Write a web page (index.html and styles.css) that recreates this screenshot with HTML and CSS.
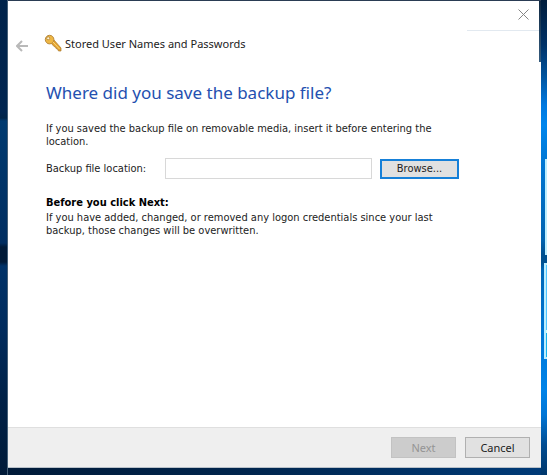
FILE: index.html
```
<!DOCTYPE html>
<html lang="en">
<head>
<meta charset="utf-8">
<title>Stored User Names and Passwords</title>
<link rel="stylesheet" href="styles.css">
</head>
<body>
<div class="desktop">
  <div class="side-left"></div>
  <main class="dialog">
    <div class="titlebar">
      <svg class="close" width="11" height="11" viewBox="0 0 11 11"><path d="M.5.5l10 10M10.5.5l-10 10"/></svg>
    </div>
    <header class="header">
      <svg class="back" width="12" height="12" viewBox="0 0 12 12"><path d="M12 6H1.5M6 1L1 6l5 5"/></svg>
      <svg class="key" width="18" height="18" viewBox="0 0 18 18">
        <path class="key-shaft" d="M8 7l2-1 7 8v3h-2.500l-1-2-1.500-.5-.5-1.500-1.500-.5L7 9z"/>
        <circle class="key-bow" cx="5.600" cy="5.600" r="4.300"/>
        <circle class="key-hole" cx="4.200" cy="4.300" r="1.500"/>
        <path class="key-shine" d="M9 8l6.500 7"/>
      </svg>
      <span class="name">Stored User Names and Passwords</span>
    </header>
    <section class="content">
      <h1>Where did you save the backup file?</h1>
      <p class="intro"><span class="l1">If you saved the backup file on removable media, insert it before entering the</span><br><span>location.</span></p>
      <div class="field">
        <label for="path">Backup file location:</label>
        <input id="path" type="text">
        <button class="browse">Browse...</button>
      </div>
      <h2>Before you click Next:</h2>
      <p class="note"><span class="l2">If you have added, changed, or removed any logon credentials since your last</span><br><span class="l3">backup, those changes will be overwritten.</span></p>
    </section>
    <footer class="footer">
      <button class="next" disabled>Next</button>
      <button class="cancel">Cancel</button>
    </footer>
  </main>
  <div class="side-right">
    <div class="pane pane-top"></div>
    <div class="pane pane-bottom"></div>
  </div>
</div>
</body>
</html>
```
FILE: styles.css
```
* { box-sizing: border-box; }
body { margin: 0; overflow: hidden; }
.desktop {
  width: 547px;
  height: 475px;
  padding-top: 1px;
  display: grid;
  grid-template-columns: 8px 533px 6px;
  background: linear-gradient(90deg, #001a38 0, #00254d 45%, #003b78 100%);
  font: 11px/13px "DejaVu Sans Condensed", "DejaVu Sans", sans-serif;
  color: #222;
}
.side-left {
  margin-top: -1px;
  height: 475px;
  border-right: 1px solid #456078;
  background: linear-gradient(#00234a 0, #002550 112px, #002448 118px, #003a70 121px, #003468 180px, #002d60 243px, #001a38 247px, #001a38 262px, #003268 266px, #002b5c 330px, #002147 400px, #001a38 475px);
}
.dialog {
  height: 467px;
  display: flex;
  flex-direction: column;
  background: #fff;
  box-shadow: 0 -1px #2a3c54;
  border-bottom: 1px solid #b9c1c9;
}
.titlebar {
  height: 30px;
  padding: 8px 12px 0 0;
  display: flex;
  justify-content: flex-end;
  background: linear-gradient(#e2e9f0, #e2e9f0) 459px 29px / 72px 1px no-repeat;
}
.close { fill: none; stroke: #858585; stroke-width: 1; }
.header { height: 50px; padding: 3px 0 0 8px; display: flex; align-items: flex-start; }
.back { margin: 6px 16px 0 0; fill: none; stroke: #b9b9b9; stroke-width: 2; }
.key-shaft { fill: #e2a12e; stroke: #a9782f; stroke-width: .7; }
.key-bow { fill: #eeb744; stroke: #b9893e; stroke-width: 1; }
.key-hole { fill: #fff4d0; stroke: #a9782f; stroke-width: .7; }
.key-shine { stroke: #ffda7b; stroke-width: 1; }
.name { margin: 3px 0 0 3px; font: 11px/13px "Noto Sans", "Open Sans", sans-serif; white-space: nowrap; }
.content { flex: 1; padding: 0 0 0 38px; white-space: nowrap; }
h1 { margin: 0; height: 41px; font: 17px/24px "Noto Sans", "Open Sans", sans-serif; color: #2450b0; }
p { margin: 0; }
.field { margin: 10px 0 17px; display: flex; align-items: center; }
.field label { width: 119px; }
.field input { width: 207px; height: 21px; margin: 0; padding: 0 3px; border: 1px solid #d8d8d8; background: #fff; }
button { padding: 0; font: inherit; color: #222; border: 1px solid #b0b0b0; border-radius: 0; background: #e1e1e1; }
.browse { width: 79px; height: 20px; margin-left: 8px; border: 2px solid #1680d8; }
h2 { margin: 0 0 2px; font: bold 11px/13px "DejaVu Sans Condensed", sans-serif; color: #000; }
.footer {
  height: 40px;
  padding: 9px 11px 0 0;
  display: flex;
  justify-content: flex-end;
  gap: 9px;
  border-top: 1px solid #dfdfdf;
  background: #efefef;
}
.footer button { width: 65px; height: 21px; font-family: "Noto Sans", sans-serif; }
.footer .next { color: #949494; background: #ccc; border-color: #c2c2c2; }
.side-right {
  position: relative;
  margin-top: -1px;
  height: 475px;
  background: linear-gradient(#001c3b 0, #003267 45px, #00529b 75px, #0078df 105px, #0086ed 125px, #0078d5 160px, #0063b0 240px, #00508f 254px, #00508f 262px, #0068b8 270px, #0078d8 340px, #0083e8 390px, #0075d5 415px, #004c91 445px, #00376b 475px);
}
.side-right::before { content: ""; position: absolute; left: -2px; top: 1px; width: 2px; height: 61px; background: linear-gradient(#102942, #345b7d); }
.pane { position: absolute; right: 0; border: 2px solid #bceeff; border-right: 0; }
.pane-top { top: 159px; width: 2px; height: 96px; background: #54c6f8; }
.pane-bottom { top: 263px; width: 3px; height: 96px; background: linear-gradient(#50c4ff 0 65px, #d0ffff 65px 68px, #16b1ec 68px); }
```
